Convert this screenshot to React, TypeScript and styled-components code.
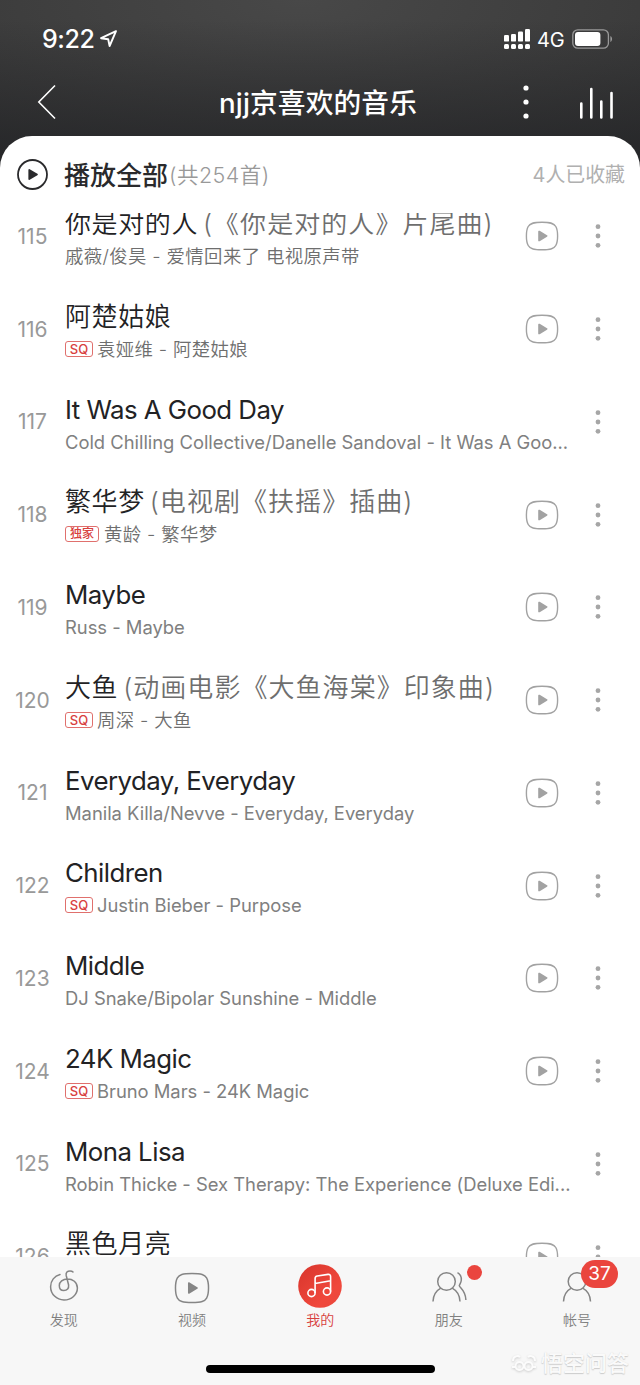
import React from "react";
import styled, { createGlobalStyle } from "styled-components";

const GlobalStyle = createGlobalStyle`
  * { box-sizing: border-box; }
  body {
    margin: 0;
    background: #fff;
    font-family: Inter, "Noto Sans CJK SC", sans-serif;
    font-kerning: normal;
    text-spacing-trim: space-all;
  }
`;

const Screen = styled.div`
  width: 640px;
  height: 1385px;
  display: flex;
  flex-direction: column;
  overflow: hidden;
  background:
    linear-gradient(180deg, rgba(32, 33, 36, 0) 20px, rgba(32, 33, 36, 0.75) 165px) 0 0 / 640px 170px no-repeat,
    radial-gradient(ellipse 480px 190px at 300px 0, #484848, #373737) 0 0 / 640px 170px no-repeat;
`;

const StatusBar = styled.div`
  height: 68px;
  padding: 9px 27px 0 42px;
  display: flex;
  align-items: center;
  color: #fff;
`;

const Clock = styled.span`
  width: 56px;
  font-size: 25px;
  font-weight: 500;
  letter-spacing: -0.4px;
  white-space: nowrap;
`;

const Network = styled.span`
  width: 28px;
  margin: 2px 7px 0 7px;
  font-size: 20px;
  font-weight: 400;
  letter-spacing: -0.1px;
`;

const Spacer = styled.div`
  flex: 1;
`;

const NavBar = styled.div`
  height: 68px;
  display: grid;
  grid-template-columns: 218px 200px 1fr 94px;
  align-items: center;
  color: #fff;
`;

const BackSlot = styled.div`
  padding: 0 0 0 37px;
  svg { display: block; }
`;

const NavTitle = styled.div`
  font-size: 27.7px;
  font-weight: 450;
  line-height: 36px;
  padding-top: 1px;
  letter-spacing: 0.15px;
  text-align: center;
  white-space: nowrap;
`;

const MoreSlot = styled.div`
  display: flex;
  justify-content: flex-end;
  padding-right: 16.5px;
`;

const BarsSlot = styled.div`
  display: flex;
  padding: 2px 0 0 33px;
`;

const Panel = styled.div`
  flex: 1;
  min-height: 0;
  display: flex;
  flex-direction: column;
  background: #fff;
  border-radius: 32px 32px 0 0;
`;

const PlayAll = styled.div`
  height: 77px;
  flex: none;
  padding: 0 15px 0 17px;
  display: flex;
  align-items: center;
  white-space: nowrap;
`;

const PlayAllLabel = styled.span`
  margin: -3px 0 0 16px;
  font-size: 26px;
  font-weight: 500;
  color: #2a2a2c;
`;

const TrackCount = styled.span`
  padding-left: 1px;
  margin-top: -3px;
  font-size: 21.5px;
  font-weight: 350;
  letter-spacing: 0.45px;
  color: #999;
`;

const Collected = styled.span`
  margin-top: -2px;
  font-size: 19.9px;
  font-weight: 400;
  color: #b0b0b0;
`;

const List = styled.div`
  height: 1044px;
  flex: none;
  overflow: hidden;
`;

const Track = styled.div`
  height: 92.75px;
  display: grid;
  grid-template-columns: 65px 1fr 87px 46.5px;
  align-items: center;

  &:first-child { margin-top: -22.9px; }
`;

const Index = styled.div`
  text-align: center;
  font-size: 21px;
  font-weight: 400;
  letter-spacing: 0;
  color: #999;
`;

const Info = styled.div`
  height: 92.75px;
  padding-top: 15.9px;
  min-width: 0;
  display: flex;
  flex-direction: column;
`;

const Title = styled.div<{ $han: boolean }>`
  height: 36px;
  line-height: 36px;
  font-size: ${(p) => (p.$han ? 26 : 25.8)}px;
  font-weight: ${(p) => (p.$han ? 350 : 400)};
  letter-spacing: ${(p) => (p.$han ? 0.6 : -0.53)}px;
  color: #222224;
  white-space: nowrap;
`;

const Alias = styled.span`
  margin-left: -3px;
  color: #6e6e6e;
  letter-spacing: 1.05px;
`;

const Subtitle = styled.div`
  height: 28px;
  display: flex;
  align-items: center;
  white-space: nowrap;
  color: #777;
`;

const Artist = styled.span<{ $han: boolean }>`
  font-size: 18.4px;
  line-height: 28px;
  font-weight: ${(p) => (p.$han ? 350 : 400)};
  letter-spacing: ${(p) => (p.$han ? 0.37 : -0.02)}px;
  color: ${(p) => (p.$han ? "#6e6e6e" : "#808080")};
`;

const Badge = styled.span<{ $wide: boolean }>`
  flex: none;
  width: ${(p) => (p.$wide ? 34 : 28)}px;
  height: 16px;
  margin-right: ${(p) => (p.$wide ? 5 : 4)}px;
  border: 1px solid #e0706d;
  border-radius: 3px;
  display: flex;
  align-items: center;
  justify-content: center;
  font-size: ${(p) => (p.$wide ? 12 : 13)}px;
  line-height: 14px;
  font-weight: 500;
  color: #d8403e;
`;

const PlaySlot = styled.div`
  padding-left: 18.6px;
  svg { display: block; }
`;

const DotsSlot = styled.div`
  svg { display: block; }
`;

const TabBar = styled.div`
  height: 128px;
  flex: none;
  display: flex;
  flex-direction: column;
  position: relative;
  background: #f7f7f7;
`;

const Tabs = styled.div`
  display: grid;
  grid-template-columns: repeat(5, 128.3px);
  height: 78px;
  margin-left: -0.4px;
`;

const Tab = styled.div<{ $active?: boolean }>`
  position: relative;
  display: flex;
  flex-direction: column;
  align-items: center;
  font-size: 14px;
  line-height: 20px;
  font-weight: 350;
  color: ${(p) => (p.$active ? "#d8403e" : "#808080")};
`;

const TabIcon = styled.div<{ $top: number }>`
  height: 53px;
  padding-top: ${(p) => p.$top}px;
  svg { display: block; }
`;

const Dot = styled.span`
  position: absolute;
  left: 82.3px;
  top: 7.5px;
  width: 15px;
  height: 15px;
  border-radius: 50%;
  background: #ea453e;
`;

const CountBadge = styled.span`
  position: absolute;
  left: 68.3px;
  top: 3px;
  width: 37px;
  height: 28px;
  border-radius: 14px;
  background: #ea453e;
  color: #fff;
  font-size: 19px;
  line-height: 28px;
  font-weight: 400;
  text-align: center;
`;

const HomeIndicator = styled.div`
  width: 229px;
  height: 8px;
  margin: 30px 0 0 206px;
  border-radius: 4px;
  background: #000;
`;

const Watermark = styled.div`
  position: absolute;
  right: 11px;
  bottom: 6px;
  display: flex;
  align-items: center;
  gap: 4px;
  font-size: 22px;
  line-height: 32px;
  font-weight: 500;
  color: #fafafa;
  text-shadow: 0 1px 1px #ccc, 0 0 1px #ddd;
  svg { filter: drop-shadow(0 1px 1px #ccc); }
`;

interface Song {
  no: number;
  title: string;
  alias?: string;
  artist: string;
  badge?: string;
  video?: boolean;
}

const songs: Song[] = [
  { no: 115, title: "你是对的人", alias: "(《你是对的人》片尾曲)", artist: "戚薇/俊昊 - 爱情回来了 电视原声带", video: true },
  { no: 116, title: "阿楚姑娘", artist: "袁娅维 - 阿楚姑娘", badge: "SQ", video: true },
  { no: 117, title: "It Was A Good Day", artist: "Cold Chilling Collective/Danelle Sandoval - It Was A Goo..." },
  { no: 118, title: "繁华梦", alias: "(电视剧《扶摇》插曲)", artist: "黄龄 - 繁华梦", badge: "独家", video: true },
  { no: 119, title: "Maybe", artist: "Russ - Maybe", video: true },
  { no: 120, title: "大鱼", alias: "(动画电影《大鱼海棠》印象曲)", artist: "周深 - 大鱼", badge: "SQ", video: true },
  { no: 121, title: "Everyday, Everyday", artist: "Manila Killa/Nevve - Everyday, Everyday", video: true },
  { no: 122, title: "Children", artist: "Justin Bieber - Purpose", badge: "SQ", video: true },
  { no: 123, title: "Middle", artist: "DJ Snake/Bipolar Sunshine - Middle", video: true },
  { no: 124, title: "24K Magic", artist: "Bruno Mars - 24K Magic", badge: "SQ", video: true },
  { no: 125, title: "Mona Lisa", artist: "Robin Thicke - Sex Therapy: The Experience (Deluxe Edi..." },
  { no: 126, title: "黑色月亮", artist: "", video: true },
];

const isHan = (text: string) => /[\u4e00-\u9fff]/.test(text);

const VideoIcon = ({ w, h, color }: { w: number; h: number; color: string }) => (
  <svg width={w} height={h} viewBox="0 0 34 30" fill="none">
    <path
      d="M17 1.2C26 1.2 29 2.4 30.8 5.5C32.4 8.3 32.6 11 32.6 15C32.6 19 32.4 21.7 30.8 24.5C29 27.6 26 28.8 17 28.8C8 28.8 5 27.6 3.2 24.5C1.6 21.7 1.4 19 1.4 15C1.4 11 1.6 8.3 3.2 5.5C5 2.4 8 1.2 17 1.2Z"
      stroke={color}
      strokeWidth="1.4"
    />
    <path d="M13.2 10.6C13.2 9.8 14 9.4 14.7 9.8L22 14.3C22.7 14.7 22.7 15.3 22 15.7L14.7 20.2C14 20.6 13.2 20.2 13.2 19.4Z" fill={color} />
  </svg>
);

const RowDots = () => (
  <svg width="8" height="26" viewBox="0 0 8 26" fill="#a6a6a6">
    <circle cx="4" cy="3.7" r="2.4" />
    <circle cx="4" cy="13" r="2.4" />
    <circle cx="4" cy="22.3" r="2.4" />
  </svg>
);

export default function App() {
  return (
    <>
      <GlobalStyle />
      <Screen>
        <StatusBar>
          <Clock>9:22</Clock>
          <svg width="20" height="18" viewBox="0 0 20 18" fill="none" stroke="#fff" strokeWidth="1.9" strokeLinejoin="round">
            <path d="M18 1.2L3 8.2L10.2 9.2L11.6 16Z" />
          </svg>
          <Spacer />
          <svg width="26" height="20" viewBox="0 0 26 20" fill="#fff">
            <rect x="0" y="6" width="5" height="6.6" rx="1.2" />
            <rect x="7" y="5" width="5" height="7.6" rx="1.2" />
            <rect x="14" y="2.4" width="5" height="10.2" rx="1.2" />
            <rect x="21" y="0" width="5" height="12.6" rx="1.2" />
            <rect x="0" y="15" width="5" height="5" rx="1.5" />
            <rect x="7" y="15" width="5" height="5" rx="1.5" />
            <rect x="14" y="15" width="5" height="5" rx="1.5" />
            <rect x="21" y="15" width="5" height="5" rx="1.5" />
          </svg>
          <Network>4G</Network>
          <svg width="41" height="20" viewBox="0 0 41 20" fill="none">
            <rect x="0.8" y="0.8" width="35.6" height="18.4" rx="5" stroke="#999" strokeWidth="1.3" />
            <rect x="3" y="3" width="25.4" height="14" rx="3" fill="#fff" />
            <path d="M38.4 7C40.6 8 40.6 12 38.4 13Z" fill="#999" />
          </svg>
        </StatusBar>
        <NavBar>
          <BackSlot>
            <svg width="20" height="36" viewBox="0 0 20 36" fill="none" stroke="#fff" strokeWidth="1.6">
              <path d="M18 1.5L1.8 18L18 34.5" />
            </svg>
          </BackSlot>
          <NavTitle>njj京喜欢的音乐</NavTitle>
          <MoreSlot>
            <svg width="8" height="36" viewBox="0 0 8 36" fill="#fff">
              <circle cx="4" cy="4" r="2.6" />
              <circle cx="4" cy="18" r="2.6" />
              <circle cx="4" cy="32" r="2.6" />
            </svg>
          </MoreSlot>
          <BarsSlot>
            <svg width="36" height="34" viewBox="0 0 36 34" stroke="#fff" strokeWidth="2.6" strokeLinecap="round">
              <path d="M2.3 17.5V31.5M12.3 3V31.5M22.3 15.5V31.5M32.5 7V31.5" />
            </svg>
          </BarsSlot>
        </NavBar>
        <Panel>
          <PlayAll>
            <svg width="31" height="31" viewBox="0 0 31 31" fill="none">
              <circle cx="15.5" cy="15.5" r="14.5" stroke="#2a2a2c" strokeWidth="1.8" />
              <path d="M11.4 11C11.4 10.2 12 9.9 12.7 10.3L20.4 14.8C21 15.2 21 15.8 20.4 16.2L12.7 20.7C12 21.1 11.4 20.8 11.4 20Z" fill="#2a2a2c" />
            </svg>
            <PlayAllLabel>播放全部</PlayAllLabel>
            <TrackCount>(共254首)</TrackCount>
            <Spacer />
            <Collected>4人已收藏</Collected>
          </PlayAll>
          <List>
            {songs.map((s) => (
              <Track key={s.no}>
                <Index>{s.no}</Index>
                <Info>
                  <Title $han={isHan(s.title)}>
                    {s.title}
                    {s.alias && <> <Alias>{s.alias}</Alias></>}
                  </Title>
                  <Subtitle>
                    {s.badge && <Badge $wide={isHan(s.badge)}>{s.badge}</Badge>}
                    <Artist $han={isHan(s.artist)}>{s.artist}</Artist>
                  </Subtitle>
                </Info>
                <PlaySlot>{s.video && <VideoIcon w={34} h={30} color="#a2a2a2" />}</PlaySlot>
                <DotsSlot><RowDots /></DotsSlot>
              </Track>
            ))}
          </List>
          <TabBar>
            <Tabs>
              <Tab>
                <TabIcon $top={9}>
                  <svg width="32" height="36" viewBox="0 0 32 36" fill="none" stroke="#858585" strokeWidth="1.5" strokeLinecap="round">
                    <path d="M12 8.6C6.5 9.9 2.6 14.6 2.6 20.7C2.6 28 8.5 34 16 34C23.5 34 29.4 28.5 29.4 22C29.4 16 24.5 13 19.5 13C14.8 13 11.3 16 11.3 19.5C11.3 22.7 13.3 24.6 15.8 24.6C19.2 24.6 21 22.3 20.6 19L18.2 9.5C17.6 6.6 19.5 4.9 22 4.9C23.4 4.9 24.3 5.2 25 6" />
                  </svg>
                </TabIcon>
                发现
              </Tab>
              <Tab>
                <TabIcon $top={14.5}>
                  <VideoIcon w={36} h={32} color="#858585" />
                </TabIcon>
                视频
              </Tab>
              <Tab $active>
                <TabIcon $top={6}>
                  <svg width="44" height="46" viewBox="0 0 44 46" fill="none">
                    <defs>
                      <linearGradient id="mine" x1="0" y1="0" x2="1" y2="1">
                        <stop offset="0" stopColor="#d8352c" />
                        <stop offset="0.7" stopColor="#f0483c" />
                        <stop offset="1" stopColor="#e8473c" />
                      </linearGradient>
                    </defs>
                    <circle cx="22" cy="23" r="21.8" fill="url(#mine)" />
                    <g stroke="#fff" strokeWidth="1.6" strokeLinejoin="round">
                      <circle cx="13.5" cy="30" r="3.6" />
                      <circle cx="29" cy="28.5" r="3.6" />
                      <path d="M17.1 30V15.5C17.1 14 17.8 13.2 19.3 13L30 11.4C31.8 11.2 32.6 11.9 32.6 13.4V28.5M17.1 20.5L32.6 17.8" />
                    </g>
                  </svg>
                </TabIcon>
                我的
              </Tab>
              <Tab>
                <TabIcon $top={9.5}>
                  <svg width="36" height="36" viewBox="0 0 36 36" fill="none" stroke="#858585" strokeWidth="1.5">
                    <circle cx="15.5" cy="14.5" r="8.8" />
                    <path d="M2 34.5C2.3 28 5 23.8 9.8 21.2M21.2 21.2C26 23.8 28.7 28 29 34.5M26.5 5.7C29.3 7.2 30.5 10.2 30.3 13.2C30.1 15.7 28.6 17.2 28.3 18.7C28.5 20.7 34.5 23 34.9 33" />
                  </svg>
                </TabIcon>
                朋友
                <Dot />
              </Tab>
              <Tab>
                <TabIcon $top={9.5}>
                  <svg width="32" height="36" viewBox="0 0 32 36" fill="none" stroke="#858585" strokeWidth="1.5">
                    <circle cx="16" cy="14.5" r="8.8" />
                    <path d="M2.5 34.5C2.8 28 5.5 23.8 10.3 21.2M21.7 21.2C26.5 23.8 29.2 28 29.5 34.5" />
                  </svg>
                </TabIcon>
                帐号
                <CountBadge>37</CountBadge>
              </Tab>
            </Tabs>
            <HomeIndicator />
            <Watermark>
              <svg width="26" height="20" viewBox="0 0 26 20" fill="none" stroke="#fcfcfc" strokeWidth="2">
                <path d="M2 8C2 3 7 2 9 4M24 8C24 3 19 2 17 4M1 14H4M22 14H25" />
                <circle cx="8.5" cy="13" r="4" />
                <circle cx="17.5" cy="13" r="4" />
              </svg>
              悟空问答
            </Watermark>
          </TabBar>
        </Panel>
      </Screen>
    </>
  );
}
